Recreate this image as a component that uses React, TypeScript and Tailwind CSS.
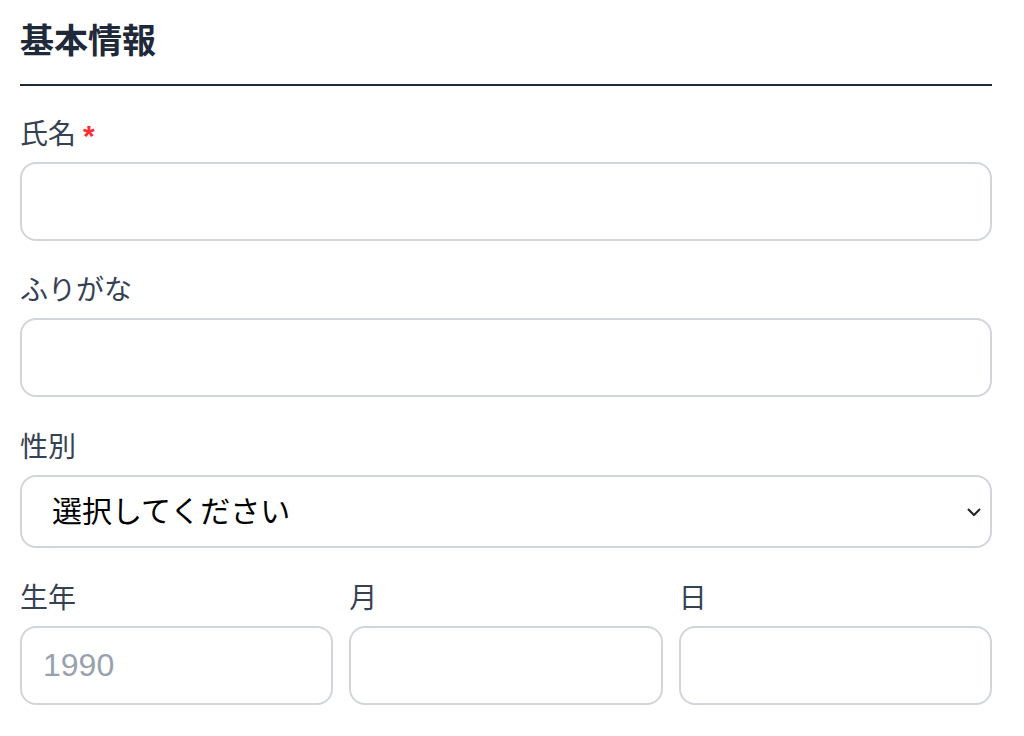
import React from 'react';

const font = { fontFamily: '"Liberation Sans", "Noto Sans CJK JP", sans-serif' };

function Label({ text, required }: { text: string; required?: boolean }) {
  return (
    <div className="flex items-start h-[28px] mb-[13px] text-[28px] leading-none text-gray-700">
      <span>{text}</span>
      {required && <span className="ml-[7px] text-[30px] font-bold text-red-500">*</span>}
    </div>
  );
}

function TextInput({ placeholder }: { placeholder?: string }) {
  return (
    <input
      type="text"
      placeholder={placeholder}
      className="block w-full h-[79px] rounded-[16px] border-2 border-gray-300 bg-white px-[21px] text-[32px] text-gray-900 placeholder:text-gray-400 outline-none"
    />
  );
}

export default function App() {
  return (
    <div className="min-h-screen bg-white" style={font}>
      <div className="ml-[20px] w-[972px] pt-[24px]">
        {/* Section heading */}
        <h2 className="pb-[26px] border-b-2 border-gray-800 text-[34px] leading-none font-bold text-gray-800">
          基本情報
        </h2>

        <div className="mt-[35px]">
          <Label text="氏名" required />
          <TextInput />
        </div>

        <div className="mt-[36px]">
          <Label text="ふりがな" />
          <TextInput />
        </div>

        <div className="mt-[37px]">
          <Label text="性別" />
          <div className="relative">
            <select
              defaultValue=""
              className="block w-full h-[73px] appearance-none rounded-[16px] border-2 border-gray-300 bg-white pl-[30px] pr-[40px] text-[30px] text-black outline-none"
            >
              <option value="">選択してください</option>
              <option value="male">男性</option>
              <option value="female">女性</option>
            </select>
            <svg
              className="pointer-events-none absolute right-[11px] top-1/2 -translate-y-1/2"
              width="14"
              height="9"
              viewBox="0 0 14 9"
              fill="none"
            >
              <path d="M1 1.5L7 7.5L13 1.5" stroke="#222" strokeWidth="2" />
            </svg>
          </div>
        </div>

        {/* Birth date */}
        <div className="mt-[37px] grid grid-cols-3 gap-x-4">
          <div>
            <Label text="生年" />
            <TextInput placeholder="1990" />
          </div>
          <div>
            <Label text="月" />
            <TextInput />
          </div>
          <div>
            <Label text="日" />
            <TextInput />
          </div>
        </div>
      </div>
    </div>
  );
}
